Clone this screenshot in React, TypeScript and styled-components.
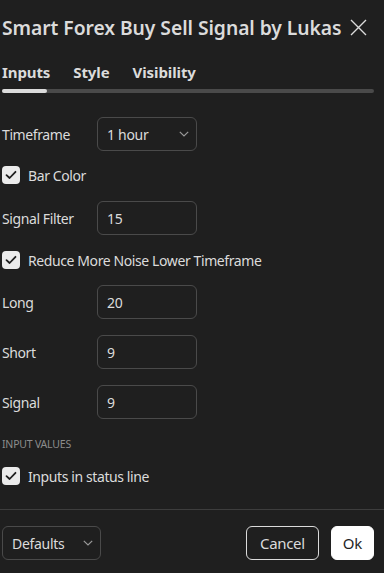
import React from "react";
import styled, { createGlobalStyle } from "styled-components";

const Global = createGlobalStyle`
  html, body { margin: 0; padding: 0; background: #1f1f1f; }
  body { font-family: "Noto Sans", "Open Sans", sans-serif; color: #dbdbdb; }
  * { box-sizing: border-box; }
`;

const Dialog = styled.div`
  width: 384px;
  height: 573px;
  background: #1f1f1f;
  display: flex;
  flex-direction: column;
  overflow: hidden;
`;

const Header = styled.div`
  display: flex;
  align-items: center;
  padding: 0 10px 0 2px;
  height: 54px;
  gap: 8px;
`;

const Title = styled.h1`
  margin: 0;
  font-size: 19.3px;
  font-weight: 600;
  color: #dbdbdb;
  white-space: nowrap;
  letter-spacing: -0.05px;
`;

const CloseBtn = styled.button`
  background: none;
  border: none;
  padding: 0;
  width: 18px;
  height: 18px;
  display: flex;
  align-items: center;
  justify-content: center;
  color: #dbdbdb;
`;

const Tabs = styled.div`
  margin: 5px 10px 0 2px;
`;

const TabRow = styled.div`
  display: flex;
  gap: 23px;
  height: 26px;
  align-items: center;
`;

const Tab = styled.div<{ $active?: boolean }>`
  font-size: 15px;
  font-weight: 700;
  letter-spacing: -0.1px;
  color: #dbdbdb;
`;

const Track = styled.div`
  margin-top: 4px;
  height: 4px;
  border-radius: 2px;
  background: #4a4a4a;
`;

const TrackActive = styled.div`
  height: 4px;
  border-radius: 2px;
  background: #dbdbdb;
`;

const Body = styled.div`
  display: flex;
  flex-direction: column;
  padding: 24px 10px 0 2px;
  flex: 1;
`;

const FieldRow = styled.div<{ $mt?: number }>`
  display: grid;
  grid-template-columns: 95px 100px;
  align-items: center;
  margin-top: ${(p) => p.$mt ?? 0}px;
`;

const Label = styled.span`
  font-size: 14px;
  letter-spacing: -0.4px;
  color: #dbdbdb;
`;

const Box = styled.div`
  height: 34px;
  border: 1px solid #4a4a4a;
  border-radius: 6px;
  display: flex;
  align-items: center;
  justify-content: space-between;
  padding: 0 7px 0 9px;
  font-size: 14px;
  letter-spacing: -0.3px;
  color: #dbdbdb;
`;

const CheckRow = styled.label<{ $mt?: number }>`
  display: flex;
  align-items: center;
  gap: 8px;
  height: 18px;
  margin-top: ${(p) => p.$mt ?? 0}px;
  font-size: 14px;
  letter-spacing: -0.4px;
  color: #dbdbdb;
`;

const CheckBox = styled.span`
  width: 18px;
  height: 18px;
  border-radius: 4px;
  background: #ebebeb;
  display: flex;
  align-items: center;
  justify-content: center;
`;

const Section = styled.div`
  margin-top: 18px;
  font-size: 10.5px;
  color: #8c8c8c;
  letter-spacing: -0.2px;
  line-height: 14px;
`;

const Divider = styled.div`
  height: 1px;
  background: #3d3d3d;
`;

const Footer = styled.div`
  display: flex;
  align-items: center;
  padding: 16px 10px 13px 2px;
`;

const SelectBtn = styled(Box)`
  width: 99px;
`;

const Spacer = styled.div`
  flex: 1;
`;

const Button = styled.button<{ $primary?: boolean }>`
  height: 34px;
  border-radius: 6px;
  font-family: inherit;
  font-size: 15px;
  letter-spacing: -0.3px;
  padding: 0 ${(p) => (p.$primary ? 11 : 13)}px;
  border: 1px solid ${(p) => (p.$primary ? "#ffffff" : "#dbdbdb")};
  background: ${(p) => (p.$primary ? "#ffffff" : "transparent")};
  color: ${(p) => (p.$primary ? "#1f1f1f" : "#dbdbdb")};
  margin-left: ${(p) => (p.$primary ? 12 : 0)}px;
`;

const Chevron = () => (
  <svg width="10" height="6" viewBox="0 0 10 6" fill="none">
    <path d="M0.8 0.8L5 5L9.2 0.8" stroke="#9a9a9a" strokeWidth="1.2" />
  </svg>
);

const Check = () => (
  <svg width="12" height="10" viewBox="0 0 12 10" fill="none">
    <path d="M1.5 5.2L4.6 8L10.5 1.8" stroke="#1f1f1f" strokeWidth="1.8" strokeLinecap="round" strokeLinejoin="round" />
  </svg>
);

export default function App() {
  return (
    <Dialog>
      <Global />
      <Header>
        <Title>Smart Forex Buy Sell Signal by Lukas</Title>
        <CloseBtn aria-label="close">
          <svg width="17" height="17" viewBox="0 0 17 17" fill="none">
            <path d="M1 1L16 16M16 1L1 16" stroke="#dbdbdb" strokeWidth="1.4" />
          </svg>
        </CloseBtn>
      </Header>
      <Tabs>
        <TabRow>
          <Tab $active>Inputs</Tab>
          <Tab>Style</Tab>
          <Tab>Visibility</Tab>
        </TabRow>
        <Track>
          <TrackActive style={{ width: 45 }} />
        </Track>
      </Tabs>
      <Body>
        <FieldRow>
          <Label>Timeframe</Label>
          <Box>
            1 hour
            <Chevron />
          </Box>
        </FieldRow>
        <CheckRow $mt={15}>
          <CheckBox><Check /></CheckBox>
          Bar Color
        </CheckRow>
        <FieldRow $mt={17}>
          <Label>Signal Filter</Label>
          <Box>15</Box>
        </FieldRow>
        <CheckRow $mt={16}>
          <CheckBox><Check /></CheckBox>
          Reduce More Noise Lower Timeframe
        </CheckRow>
        <FieldRow $mt={16}>
          <Label>Long</Label>
          <Box>20</Box>
        </FieldRow>
        <FieldRow $mt={16}>
          <Label>Short</Label>
          <Box>9</Box>
        </FieldRow>
        <FieldRow $mt={16}>
          <Label>Signal</Label>
          <Box>9</Box>
        </FieldRow>
        <Section>INPUT VALUES</Section>
        <CheckRow $mt={16}>
          <CheckBox><Check /></CheckBox>
          Inputs in status line
        </CheckRow>
      </Body>
      <Divider />
      <Footer>
        <SelectBtn>
          Defaults
          <Chevron />
        </SelectBtn>
        <Spacer />
        <Button>Cancel</Button>
        <Button $primary>Ok</Button>
      </Footer>
    </Dialog>
  );
}
